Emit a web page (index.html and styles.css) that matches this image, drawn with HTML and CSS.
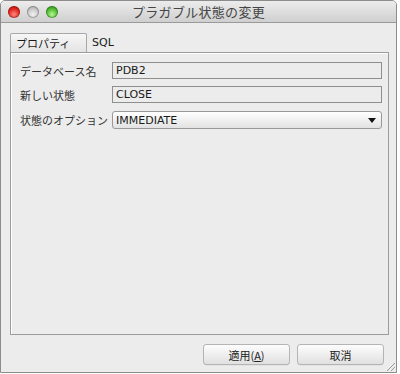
FILE: index.html
```html
<!DOCTYPE html>
<html lang="ja">
<head>
    <meta charset="UTF-8">
    <title>プラガブル状態の変更</title>
    <link rel="stylesheet" href="styles.css">
</head>
<body>

<div class="window">
    <div class="titlebar">
        <div class="lights">
            <span class="light red"></span>
            <span class="light gray"></span>
            <span class="light green"></span>
        </div>
        <div class="title">プラガブル状態の変更</div>
        <div></div>
    </div>

    <div class="main">
        <div class="tabs">
            <div class="tab active">プロパティ</div>
            <div class="tab">SQL</div>
        </div>

        <div class="panel">
            <div class="form">
                <label>データベース名</label>
                <div class="field">PDB2</div>
                <label>新しい状態</label>
                <div class="field">CLOSE</div>
                <label>状態のオプション</label>
                <div class="combo">
                    <span>IMMEDIATE</span>
                    <span class="arrow"></span>
                </div>
            </div>
        </div>

        <div class="footer">
            <button class="btn">適用(<u>A</u>)</button>
            <button class="btn">取消</button>
        </div>
    </div>
    <div class="grip"></div>
</div>

</body>
</html>
```

FILE: styles.css
```css
* {
    box-sizing: border-box;
}

body {
    margin: 0;
    background: #ffffff;
    font-family: "DejaVu Sans", "Noto Sans CJK JP", sans-serif;
    color: #1a1a1a;
}

.window {
    position: relative;
    width: 397px;
    height: 373px;
    border: 1px solid #8c8c8c;
    border-radius: 5px 5px 0 0;
    background: #ececec;
    display: flex;
    flex-direction: column;
    overflow: hidden;
}

.titlebar {
    height: 22px;
    display: grid;
    grid-template-columns: 1fr auto 1fr;
    align-items: center;
    background: linear-gradient(to bottom, #ececec, #cfcfcf);
    border-bottom: 1px solid #9a9a9a;
}

.lights {
    display: flex;
    gap: 7px;
    padding-left: 7px;
}

.light {
    width: 12px;
    height: 12px;
    border-radius: 50%;
    box-shadow: inset 0 0 0 1px rgba(0, 0, 0, 0.25);
}

.red {
    background: radial-gradient(circle at 50% 70%, #ff8a80, #e0241b 55%, #a80f0a);
}

.gray {
    background: radial-gradient(circle at 50% 70%, #f2f2f2, #c6c6c6 55%, #9a9a9a);
}

.green {
    background: radial-gradient(circle at 50% 70%, #b9f59a, #4bbb2b 55%, #2a7f17);
}

.title {
    font-family: "Noto Sans CJK JP", sans-serif;
    font-size: 13px;
    color: #454545;
    letter-spacing: 0.3px;
}

.main {
    flex: 1;
    display: flex;
    flex-direction: column;
    padding: 10px 7px 0 9px;
}

.tabs {
    display: flex;
    align-items: flex-end;
    height: 19px;
}

.tab {
    flex: none;
    font-size: 11px;
    padding: 0 5px;
    line-height: 18px;
}

.tab.active {
    width: 77px;
    font-family: "Noto Sans CJK JP", sans-serif;
    border: 1px solid #a8a8a8;
    border-bottom: none;
    border-radius: 2px 2px 0 0;
    background: linear-gradient(to bottom, #f6f6f6, #e4e4e4);
}

.panel {
    height: 283px;
    border: 1px solid #9c9c9c;
    box-shadow: inset 1px 1px 0 #ffffff;
    padding: 9px 6px 0 9px;
}

.form {
    display: grid;
    grid-template-columns: 92px 1fr;
    row-gap: 7px;
    align-items: center;
}

.form label {
    font-family: "Noto Sans CJK JP", sans-serif;
    font-size: 11px;
    color: #333;
}

.field {
    height: 17px;
    border: 1px solid #8e8e8e;
    font-size: 11px;
    line-height: 15px;
    padding-left: 3px;
}

.combo {
    height: 18px;
    margin-top: 1px;
    border: 1px solid #999;
    border-radius: 3px;
    background: linear-gradient(to bottom, #ffffff, #e2e2e2);
    display: flex;
    align-items: center;
    justify-content: space-between;
    font-size: 11px;
    padding: 0 5px 0 3px;
}

.arrow {
    width: 0;
    height: 0;
    border-left: 4px solid transparent;
    border-right: 4px solid transparent;
    border-top: 5px solid #111;
}

.footer {
    display: flex;
    justify-content: flex-end;
    gap: 9px;
    padding: 10px 6px 0 0;
}

.btn {
    width: 85px;
    height: 19px;
    border: none;
    border-radius: 3px;
    background: linear-gradient(to bottom, #fdfdfd, #e0e0e0);
    box-shadow: 0 0 0 1px #b4b4b4, 0 1px 1px #9a9a9a;
    font-family: "Noto Sans CJK JP", sans-serif;
    font-size: 11px;
    color: #222;
    padding: 0;
}

.grip {
    position: absolute;
    right: 1px;
    bottom: 1px;
    width: 10px;
    height: 10px;
    background: repeating-linear-gradient(135deg, transparent 0 2px, #9a9a9a 2px 3px);
    clip-path: polygon(100% 0, 100% 100%, 0 100%);
}
```
